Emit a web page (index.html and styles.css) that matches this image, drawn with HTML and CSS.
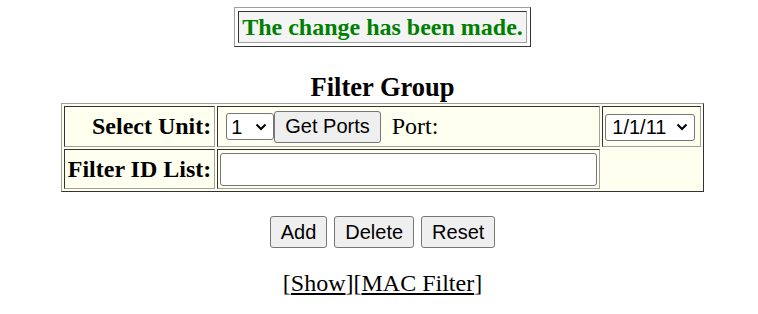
FILE: index.html
```html
<!DOCTYPE html>
<html lang="en">
<head>
  <meta charset="UTF-8">
  <title>Filter Group</title>
  <link rel="stylesheet" href="styles.css">
</head>
<body>
  <table class="msg-box">
    <tr><td class="msg">The change has been made.</td></tr>
  </table>

  <form class="filter-form">
    <table class="grid">
      <caption>Filter Group</caption>
      <tr>
        <td class="label">Select Unit:</td>
        <td class="unit-cell">
          <select class="unit-select"><option>1</option><option>2</option></select><button type="button" class="btn">Get Ports</button>
          <span class="port-text">Port:</span>
        </td>
        <td class="port-cell">
          <select class="port-select"><option>1/1/11</option></select>
        </td>
      </tr>
      <tr>
        <td class="label">Filter ID List:</td>
        <td class="input-cell"><input type="text" class="id-input"></td>
      </tr>
    </table>

    <div class="actions">
      <button type="button" class="btn">Add</button>
      <button type="button" class="btn">Delete</button>
      <button type="reset" class="btn">Reset</button>
    </div>
  </form>

  <div class="links">[<a href="#">Show</a>][<a href="#">MAC Filter</a>]</div>
</body>
</html>
```

FILE: styles.css
```css
html, body {
  margin: 0;
  padding: 0;
}
body {
  padding: 7px 0 0 7px;
  font-family: "Liberation Serif", "Times New Roman", serif;
  font-size: 24px;
  color: #000;
  background: #fff;
}
.msg-box {
  margin: 0 auto;
  border: 1px solid;
  border-color: #a0a0a0 #333 #333 #a0a0a0;
  border-spacing: 3px;
  background: #fff;
}
.msg {
  border: 1px solid;
  border-color: #333 #a0a0a0 #a0a0a0 #333;
  background: #f4f4f4;
  color: #008000;
  font-weight: bold;
  padding: 1px 3px;
  line-height: 28px;
}
.filter-form {
  margin: 0;
}
.grid {
  margin: 0 auto;
  border: 1px solid;
  border-color: #a0a0a0 #333 #333 #a0a0a0;
  border-spacing: 2px;
  background: #fffff0;
}
.grid caption {
  font-size: 26.5px;
  font-weight: bold;
  margin-top: 25px;
  line-height: 31px;
}
.grid td {
  border: 1px solid;
  border-color: #333 #a0a0a0 #a0a0a0 #333;
  padding: 3.5px 2px;
  vertical-align: middle;
  white-space: nowrap;
}
.grid td.label {
  font-weight: bold;
  text-align: right;
  padding: 3px 3px;
}
.grid td.input-cell {
  padding: 2.5px 2px;
}
.btn, select, input {
  font-family: "Liberation Sans", Arial, sans-serif;
  font-size: 20px;
  color: #000;
  box-sizing: border-box;
  vertical-align: middle;
}
.btn {
  height: 32px;
  padding: 0 10px;
  border: 1px solid #767676;
  border-radius: 3px;
  background: #efefef;
}
select {
  appearance: none;
  -webkit-appearance: none;
  height: 27px;
  padding: 0 22px 0 4px;
  border: 1px solid #767676;
  border-radius: 3px;
  background-color: #fff;
  background-image: url("data:image/svg+xml;utf8,<svg xmlns='http://www.w3.org/2000/svg' width='12' height='8' viewBox='0 0 12 8'><path d='M1.5 1.5 L6 6 L10.5 1.5' fill='none' stroke='black' stroke-width='2'/></svg>");
  background-repeat: no-repeat;
  background-position: right 6px center;
}
.unit-select {
  width: 48px;
  margin-left: 6px;
}
.port-select {
  width: 90px;
  margin-right: 3px;
  padding-left: 6px;
}
.port-text {
  margin-left: 5px;
  vertical-align: middle;
}
.id-input {
  width: 377px;
  height: 33px;
  border: 1px solid #767676;
  border-radius: 3px;
  padding: 1px 3px;
  display: block;
}
.actions {
  margin-top: 24px;
  display: flex;
  justify-content: center;
  gap: 7px;
}
.links {
  margin-top: 21px;
  text-align: center;
  line-height: 28px;
}
.links a {
  color: #000;
}
```
